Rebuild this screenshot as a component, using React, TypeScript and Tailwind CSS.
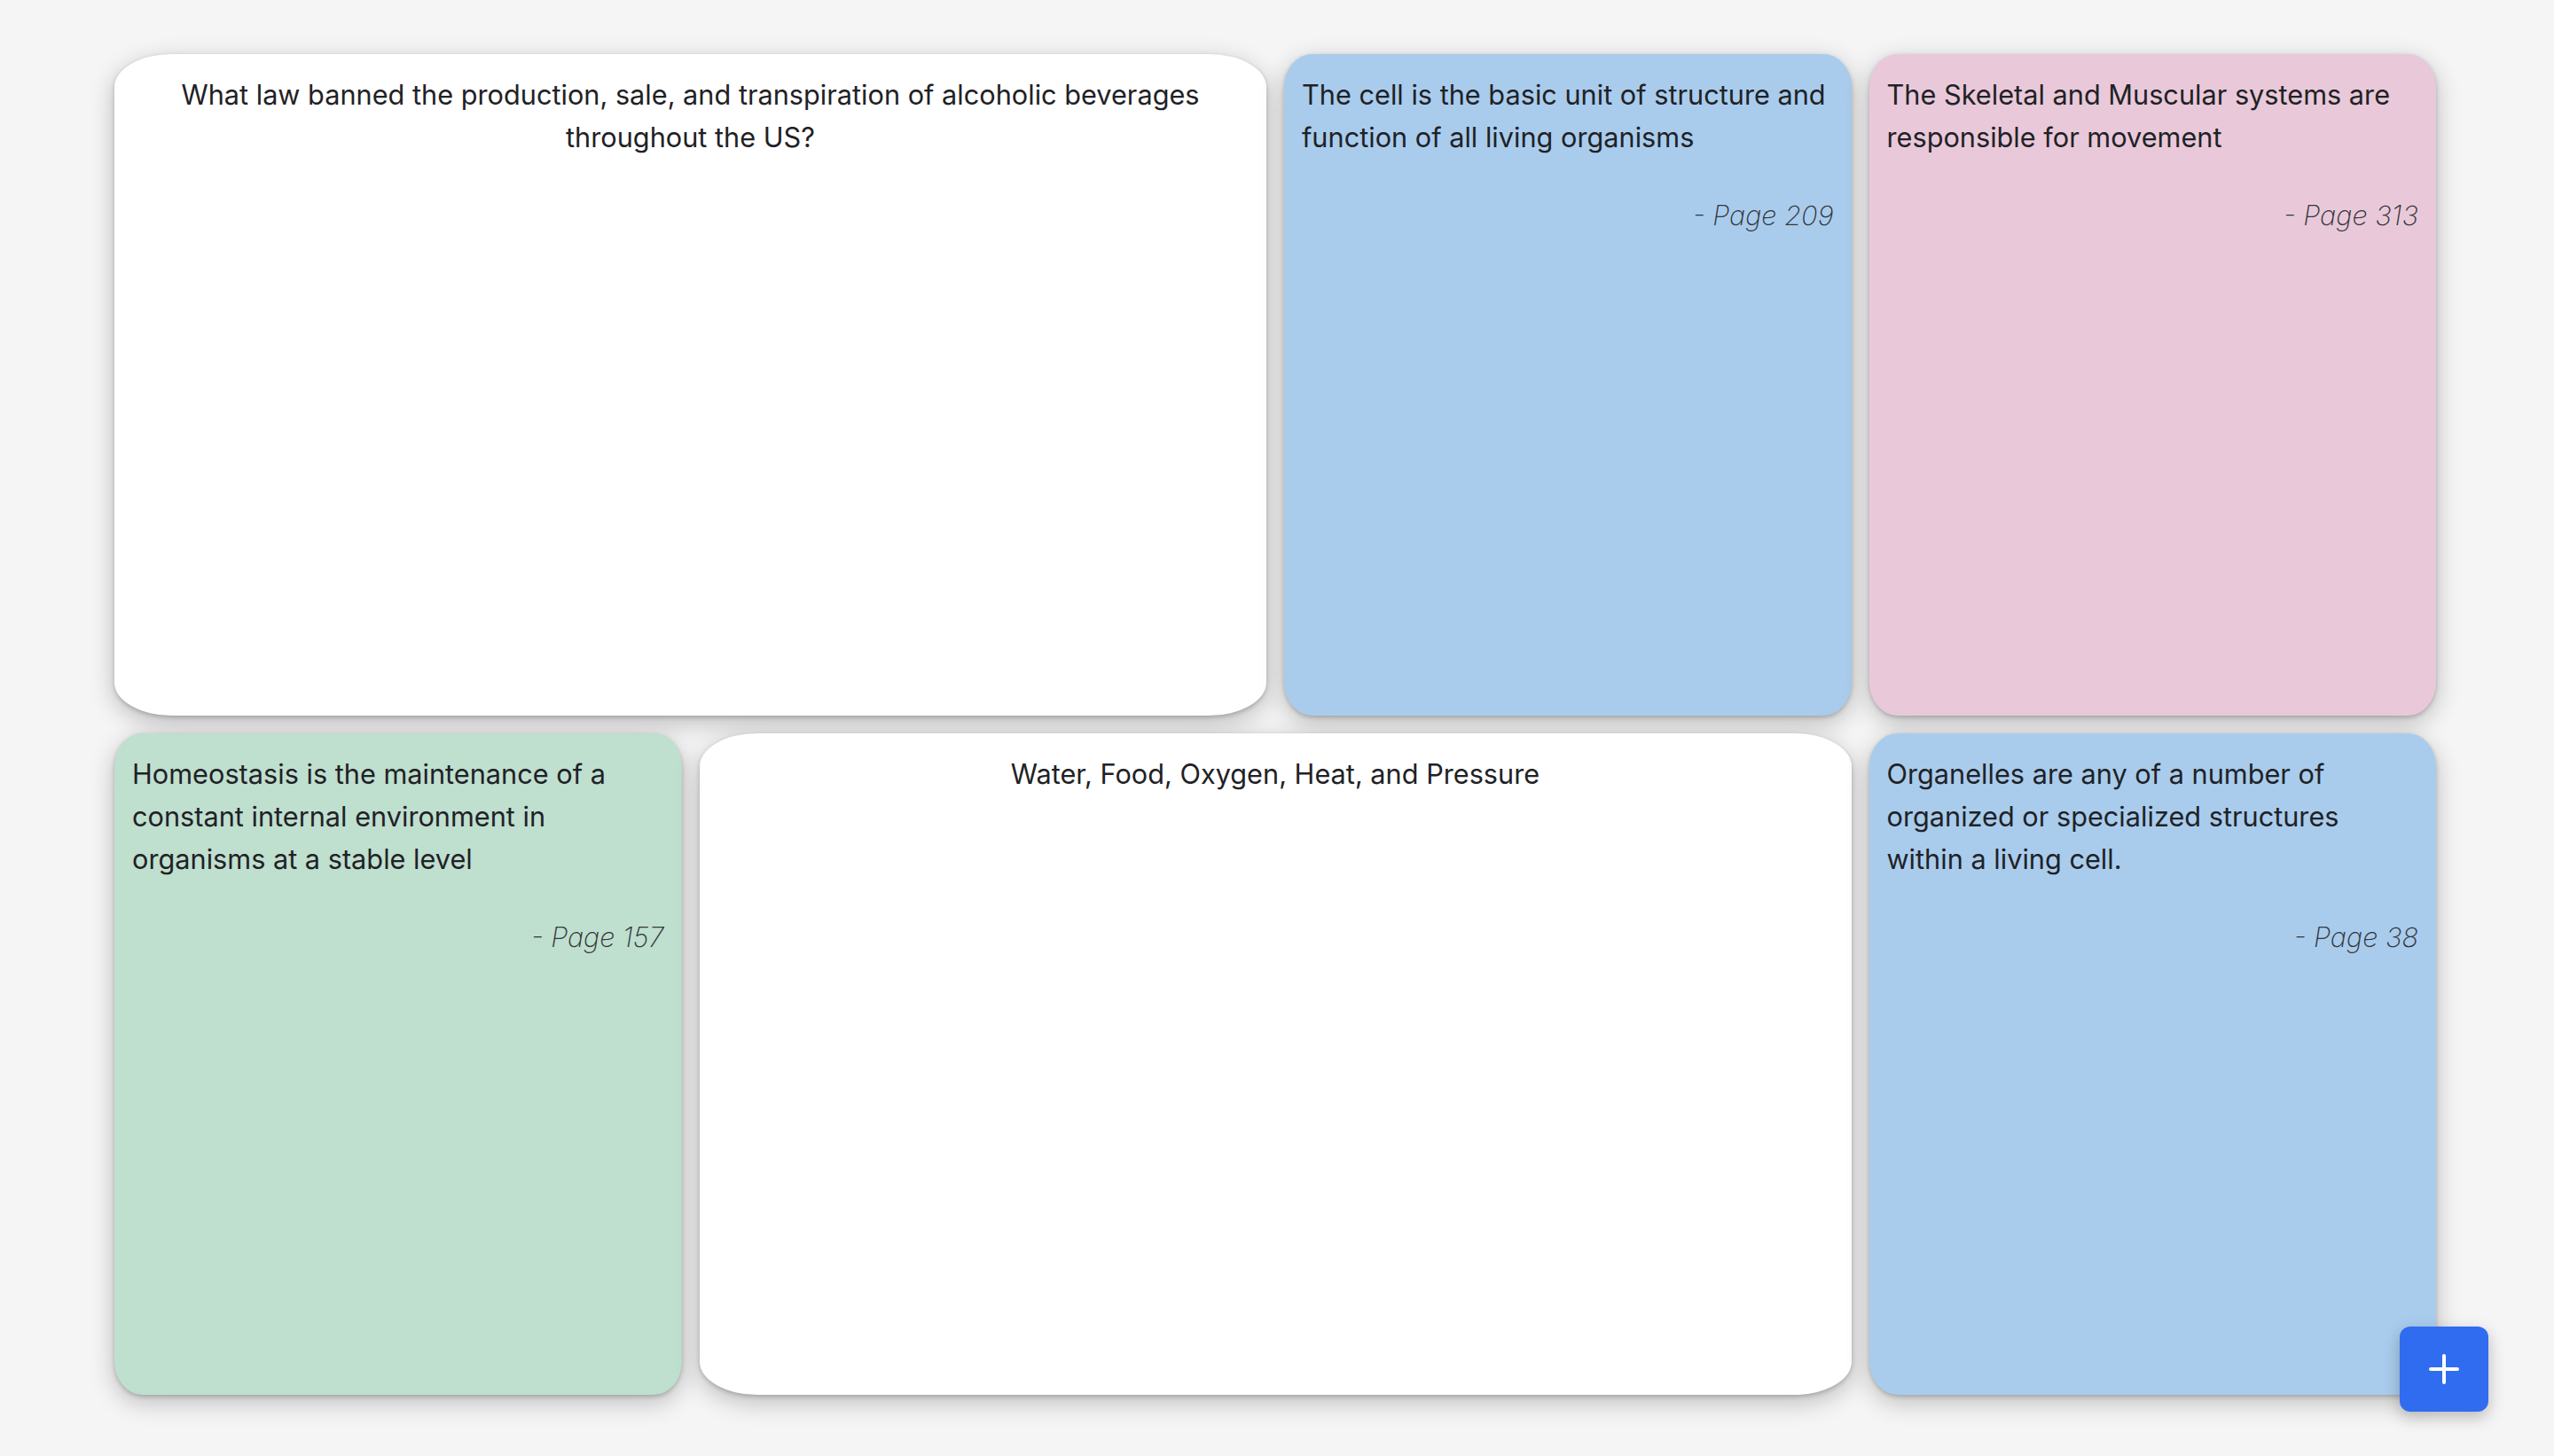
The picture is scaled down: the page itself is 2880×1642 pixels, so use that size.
type Card = {
  text: string;
  page?: number;
  color: string;
  wide?: boolean;
};

const CARDS: Card[] = [
  { text: 'What law banned the production, sale, and transpiration of alcoholic beverages throughout the US?', color: 'bg-white', wide: true },
  { text: 'The cell is the basic unit of structure and function of all living organisms', page: 209, color: 'bg-[#a9cced]' },
  { text: 'The Skeletal and Muscular systems are responsible for movement', page: 313, color: 'bg-[#e9c9d9]' },
  { text: 'Homeostasis is the maintenance of a constant internal environment in organisms at a stable level', page: 157, color: 'bg-[#bfdfcf]' },
  { text: 'Water, Food, Oxygen, Heat, and Pressure', color: 'bg-white', wide: true },
  { text: 'Organelles are any of a number of organized or specialized structures within a living cell.', page: 38, color: 'bg-[#a9cced]' },
];

function NoteCard({ card }: { card: Card }) {
  return (
    <div
      className={`${card.color} ${card.wide ? 'col-span-2 text-center' : ''} rounded-[5%] px-5 pt-[22px] pb-5 shadow-[0_2px_5px_rgba(0,0,0,0.2),0_8px_28px_rgba(0,0,0,0.24)]`}
    >
      <p className="text-[30.7px] leading-[48px] text-[#1f2226]">{card.text}</p>
      {card.page !== undefined && (
        <p className="mt-10 text-right text-[30.7px] leading-[48px] font-extralight italic text-[#33363a]">
          - Page {card.page}
        </p>
      )}
    </div>
  );
}

export default function App() {
  return (
    <div className="relative min-h-[1642px] bg-[#f5f5f5] font-['Inter','Noto_Sans',sans-serif]">
      <div className="ml-[129px] grid w-[2618px] grid-cols-4 grid-rows-[746px_746px] gap-5 pt-[61px]">
        {CARDS.map((c, i) => (
          <NoteCard key={i} card={c} />
        ))}
      </div>

      <button className="absolute right-[74px] bottom-[50px] flex h-[96px] w-[100px] items-center justify-center rounded-xl bg-[#306cf0] shadow-[0_6px_18px_rgba(0,0,0,0.25)]">
        <svg width="34" height="34" viewBox="0 0 34 34" fill="none" stroke="white" strokeWidth="4" strokeLinecap="round">
          <path d="M17 2v30M2 17h30" />
        </svg>
      </button>
    </div>
  );
}
